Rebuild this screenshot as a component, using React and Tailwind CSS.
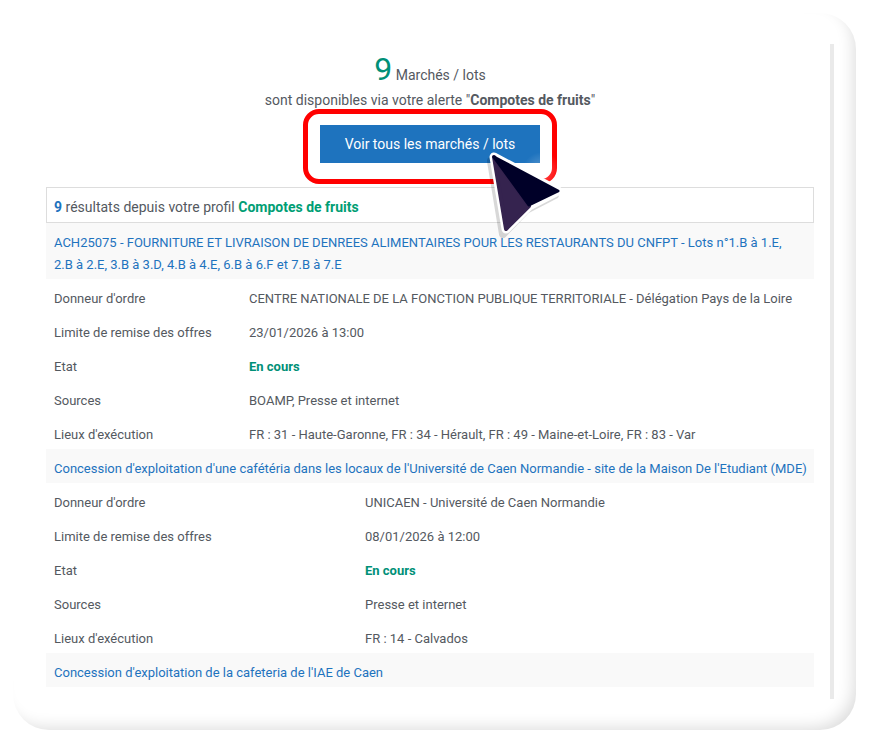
import React from "react";

const PROFILE = "Compotes de fruits";

const notices = [
  {
    id: 1,
    title:
      "ACH25075 - FOURNITURE ET LIVRAISON DE DENREES ALIMENTAIRES POUR LES RESTAURANTS DU CNFPT - Lots n°1.B à 1.E, 2.B\u00a0à\u00a02.E, 3.B\u00a0à\u00a03.D, 4.B\u00a0à\u00a04.E, 6.B\u00a0à\u00a06.F et 7.B\u00a0à\u00a07.E",
    labelWidth: "w-[195px]",
    buyer:
      "CENTRE NATIONALE DE LA FONCTION PUBLIQUE TERRITORIALE - Délégation Pays de la Loire",
    deadline: "23/01/2026 à 13:00",
    sources: "BOAMP, Presse et internet",
    places:
      "FR : 31 - Haute-Garonne, FR : 34 - Hérault, FR : 49 - Maine-et-Loire, FR : 83 - Var",
  },
  {
    id: 2,
    title:
      "Concession d'exploitation d'une cafétéria dans les locaux de l'Université de Caen Normandie - site de la Maison De l'Etudiant (MDE)",
    labelWidth: "w-[311px]",
    buyer: "UNICAEN - Université de Caen Normandie",
    deadline: "08/01/2026 à 12:00",
    sources: "Presse et internet",
    places: "FR : 14 - Calvados",
  },
  {
    id: 3,
    title: "Concession d'exploitation de la cafeteria de l'IAE de Caen",
  },
];

const Row = ({ label, width, children }) => (
  <tr>
    <th scope="row" className={`${width} px-2 pt-[9px] pb-[3px] font-normal`}>
      {label}
    </th>
    <td className="px-2 pt-[9px] pb-[3px]">{children}</td>
  </tr>
);

const Notice = ({ notice }) => (
  <table className="w-full border-collapse text-left text-[13px] leading-[22px]">
    <thead>
      <tr className="bg-[#f9f9f9]">
        <th colSpan={2} className="pt-[9px] pr-1 pb-[3px] pl-2 font-normal">
          <a href="#" className="text-[#1e73be]">
            {notice.title}
          </a>
        </th>
      </tr>
    </thead>
    {notice.buyer && (
      <tbody>
        <Row label="Donneur d'ordre" width={notice.labelWidth}>
          {notice.buyer}
        </Row>
        <Row label="Limite de remise des offres" width={notice.labelWidth}>
          {notice.deadline}
        </Row>
        <Row label="Etat" width={notice.labelWidth}>
          <strong className="font-bold text-[#009077]">En cours</strong>
        </Row>
        <Row label="Sources" width={notice.labelWidth}>
          {notice.sources}
        </Row>
        <Row label="Lieux d'exécution" width={notice.labelWidth}>
          {notice.places}
        </Row>
      </tbody>
    )}
  </table>
);

// Arrow pointer laid over the main button
const Pointer = () => (
  <svg
    className="pointer-events-none absolute top-6 left-40"
    width="90"
    height="90"
    viewBox="480 149 90 90"
    aria-hidden="true"
  >
    <defs>
      <radialGradient id="glow">
        <stop offset="0" stopColor="#fff" stopOpacity="0.3" />
        <stop offset="1" stopColor="#fff" stopOpacity="0" />
      </radialGradient>
    </defs>
    <circle cx="542" cy="172" r="20" fill="url(#glow)" />
    <path
      d="M494 157 L558 191 L529 206 L506 230 Z"
      transform="translate(-3 4)"
      fill="#000"
      stroke="#000"
      strokeWidth="8"
      strokeLinejoin="round"
      opacity="0.15"
    />
    <path
      d="M494 157 L558 191 L529 206 L506 229 Z"
      fill="#fff"
      stroke="#fff"
      strokeWidth="9"
      strokeLinejoin="round"
    />
    <path
      d="M494 157 L529 206 L506 229 Z"
      fill="#35234f"
      stroke="#35234f"
      strokeWidth="4"
      strokeLinejoin="round"
    />
    <path
      d="M494 157 L558 191 L529 205 Z"
      fill="#000028"
      stroke="#000028"
      strokeWidth="3"
      strokeLinejoin="round"
    />
  </svg>
);

const App = () => {
  return (
    <div className="min-h-screen bg-white p-[13px] font-[Roboto,sans-serif] text-[#54595f]">
      <main className="rounded-[36px] py-[31px] pr-[22px] pl-[33px] shadow-[inset_-8px_-8px_16px_-6px_rgba(0,0,0,0.14)]">
        <div className="border-r-4 border-[#eaeaea] pr-4 pb-3">
          <header className="flex flex-col items-center pb-6 text-sm leading-[22px]">
            <p className="pt-[11px] leading-7">
              <span className="text-[32px] text-[#009077]">9</span> Marchés / lots
            </p>
            <p>
              sont disponibles via votre alerte "
              <strong className="font-bold">{PROFILE}</strong>"
            </p>
            <div className="relative mt-[14px]">
              <button
                type="button"
                className="block h-[38px] bg-[#1e73be] px-[25px] text-white"
              >
                Voir tous les marchés / lots
              </button>
              <div className="pointer-events-none absolute -inset-x-[17px] -top-4 -bottom-[21px] rounded-2xl border-5 border-[#ff0000]" />
              <Pointer />
            </div>
          </header>

          <h1 className="border border-[#dddddd] px-[7px] pt-2 pb-1 text-sm leading-[22px]">
            <strong className="font-bold text-[#1e73be]">9</strong> résultats
            depuis votre profil{" "}
            <strong className="font-bold text-[#009e74]">{PROFILE}</strong>
          </h1>

          {notices.map((notice) => (
            <Notice key={notice.id} notice={notice} />
          ))}
        </div>
      </main>
    </div>
  );
};

export default App;
